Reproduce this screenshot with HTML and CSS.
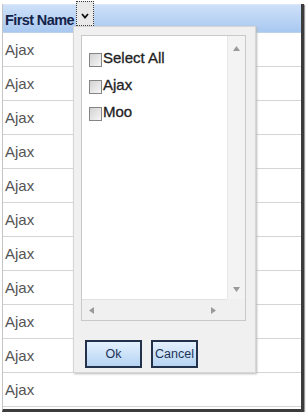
FILE: index.html
```html
<!DOCTYPE html>
<html>
<head>
<meta charset="utf-8">
<link rel="stylesheet" href="styles.css">
</head>
<body>
<div class="grid">
  <div class="header">
    <span class="title">First Name</span>
    <span class="filter-btn"><svg width="8" height="6" viewBox="0 0 8 6"><path d="M1 1 L4 4.5 L7 1" fill="none" stroke="#111" stroke-width="1.8"/></svg></span>
  </div>
  <div class="rows">
    <div class="row">Ajax</div>
    <div class="row">Ajax</div>
    <div class="row">Ajax</div>
    <div class="row">Ajax</div>
    <div class="row">Ajax</div>
    <div class="row">Ajax</div>
    <div class="row">Ajax</div>
    <div class="row">Ajax</div>
    <div class="row">Ajax</div>
    <div class="row">Ajax</div>
    <div class="row">Ajax</div>
  </div>
  <div class="popup">
    <div class="listbox">
      <div class="items">
        <label class="item"><span class="check"></span>Select All</label>
        <label class="item"><span class="check"></span>Ajax</label>
        <label class="item"><span class="check"></span>Moo</label>
      </div>
      <div class="vscroll">
        <svg width="7" height="5" viewBox="0 0 7 5"><polygon points="0,5 3.5,0 7,5" fill="#9a9a9a"/></svg>
        <svg width="7" height="5" viewBox="0 0 7 5"><polygon points="0,0 3.5,5 7,0" fill="#9a9a9a"/></svg>
      </div>
      <div class="hscroll">
        <svg width="5" height="7" viewBox="0 0 5 7"><polygon points="5,0 0,3.5 5,7" fill="#9a9a9a"/></svg>
        <svg width="5" height="7" viewBox="0 0 5 7"><polygon points="0,0 5,3.5 0,7" fill="#9a9a9a"/></svg>
      </div>
      <div class="corner"></div>
    </div>
    <div class="buttons">
      <button class="btn btn-ok">Ok</button>
      <button class="btn btn-cancel">Cancel</button>
    </div>
  </div>
</div>
</body>
</html>
```
FILE: styles.css
```css
html, body {
  margin: 0;
  padding: 0;
  background: #ffffff;
}
body {
  font-family: "Liberation Sans", Arial, sans-serif;
}
.grid {
  position: relative;
  margin: 4px 0 0 2px;
  width: 298px;
  border-left: 1px solid #c4c4c4;
  border-right: 3px solid #3c3c3c;
  border-bottom: 3px solid #3c3c3c;
  padding-bottom: 2px;
  box-shadow: 1px 1px 1px #9a9a9a;
}
.header {
  box-sizing: border-box;
  height: 29px;
  display: flex;
  align-items: center;
  padding-left: 2px;
  background: linear-gradient(#cde0f8, #a9c8f0);
  border-top: 1px solid #dbe7f7;
  border-bottom: 1px solid #bcd0ea;
}
.title {
  font-weight: bold;
  font-size: 14.5px;
  letter-spacing: -0.6px;
  color: #14234a;
  padding-top: 3px;
}
.filter-btn {
  box-sizing: border-box;
  align-self: flex-start;
  margin-top: -4px;
  margin-left: 2px;
  width: 18px;
  height: 25px;
  border: 1px dotted #3a3a3a;
  background: #e9e9e9;
  display: flex;
  justify-content: center;
  padding-top: 11px;
}
.filter-btn svg {
  display: block;
}
.row {
  box-sizing: border-box;
  height: 34px;
  border-bottom: 1px solid #d4d4d4;
  display: flex;
  align-items: center;
  padding-left: 2px;
  font-size: 15px;
  color: #555555;
}
.popup {
  position: absolute;
  left: 70px;
  top: 22px;
  box-sizing: border-box;
  width: 183px;
  height: 347px;
  background: #f0f0f0;
  border: 1px solid #d6d6d6;
  box-shadow: 1px 1px 2px #b8b8b8;
  padding: 8px 9px 0 7px;
}
.listbox {
  box-sizing: border-box;
  height: 286px;
  background: #ffffff;
  border: 1px solid #c9c9c9;
  display: grid;
  grid-template-columns: 1fr 18px;
  grid-template-rows: 1fr 21px;
}
.items {
  padding: 8px 0 0 7px;
  display: flex;
  flex-direction: column;
}
.item {
  height: 27px;
  display: flex;
  align-items: center;
  font-size: 15px;
  color: #222222;
  -webkit-text-stroke: 0.3px #222222;
}
.check {
  box-sizing: border-box;
  width: 13px;
  height: 14px;
  margin-top: 5px;
  margin-right: 1px;
  border: 1px solid #858585;
  background: linear-gradient(135deg, #d2d2d2, #f6f6f6);
}
.vscroll {
  background: #f3f3f3;
  border-left: 1px solid #e6e6e6;
  display: flex;
  flex-direction: column;
  justify-content: space-between;
  align-items: center;
  padding: 10px 0 7px;
}
.hscroll {
  background: #f0f0f0;
  border-top: 1px solid #e2e2e2;
  display: flex;
  justify-content: space-between;
  align-items: center;
  padding: 0 11px 0 7px;
}
.corner {
  background: #f0f0f0;
}
.buttons {
  display: flex;
  gap: 9px;
  margin-top: 19px;
  padding-left: 4px;
}
.btn {
  box-sizing: border-box;
  height: 28px;
  border: 2px solid #23314a;
  background: linear-gradient(#e4f1fd, #b6d4f3);
  color: #1c3358;
  font-family: "Liberation Sans", Arial, sans-serif;
  font-size: 12.5px;
  padding: 0;
}
.btn-ok {
  width: 57px;
}
.btn-cancel {
  width: 47px;
}
```
